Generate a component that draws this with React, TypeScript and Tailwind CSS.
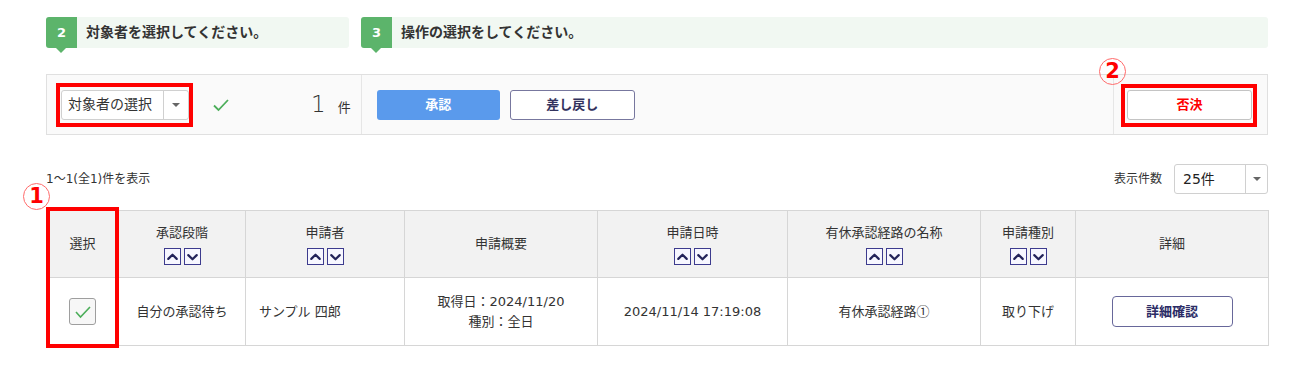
import React from 'react';

// Column definitions for the approval table.
interface Column {
  label: string;
  width: number;
  sortable: boolean;
}

const columns: Column[] = [
  { label: '選択', width: 72, sortable: false },
  { label: '承認段階', width: 127, sortable: true },
  { label: '申請者', width: 159, sortable: true },
  { label: '申請概要', width: 193, sortable: false },
  { label: '申請日時', width: 190, sortable: true },
  { label: '有休承認経路の名称', width: 193, sortable: true },
  { label: '申請種別', width: 95, sortable: true },
  { label: '詳細', width: 193, sortable: false },
];

// Latin glyphs in DejaVu (wide, like the original), Japanese falls through to Noto CJK.
const font = { fontFamily: '"DejaVu Sans", "Noto Sans CJK JP", sans-serif' };

// Step banner with a green number badge and a small tail underneath.
const StepBanner: React.FC<{ num: string; text: string; className: string }> = ({ num, text, className }) => (
  <div className={`flex h-[31px] items-center rounded-[3px] bg-[#f1f8f2] ${className}`}>
    <div className="relative flex h-full w-[31px] items-center justify-center rounded-l-[3px] bg-[#5cb46b] text-[13px] font-bold text-white">
      {num}
      <span className="absolute left-[10px] top-full h-0 w-0 border-x-[5px] border-t-[5px] border-x-transparent border-t-[#5cb46b]" />
    </div>
    <span className="ml-[9px] text-[14px] font-bold text-[#333]">{text}</span>
  </div>
);

const SortButtons: React.FC = () => (
  <div className="mt-[6px] flex justify-center gap-[3px]">
    {['M3.5 10 L8 5.5 L12.5 10', 'M3.5 6 L8 10.5 L12.5 6'].map(d => (
      <span key={d} className="flex h-[17px] w-[17px] items-center justify-center border-[1.5px] border-[#3d3b8e] bg-[#f7f7ff]">
        <svg width="16" height="16" viewBox="0 0 16 16">
          <path d={d} fill="none" stroke="#23235a" strokeWidth="2.3" strokeLinecap="round" strokeLinejoin="round" />
        </svg>
      </span>
    ))}
  </div>
);

const CircledNumber: React.FC<{ n: string; className: string }> = ({ n, className }) => (
  <div className={`absolute flex h-[27px] w-[27px] items-center justify-center rounded-full border border-[#ff6b6b] text-[21px] font-bold leading-none text-[#ff0000] ${className}`}>
    {n}
  </div>
);

export default function App() {
  return (
    <div className="relative h-[366px] w-[1297px] overflow-hidden bg-white pl-[46px] pr-[29px] pt-[17px] text-[#333]" style={font}>
      {/* Steps */}
      <div className="flex gap-[12px]">
        <StepBanner num="2" text="対象者を選択してください。" className="w-[303px]" />
        <StepBanner num="3" text="操作の選択をしてください。" className="flex-1" />
      </div>

      {/* Action panel */}
      <div className="mt-[26px] flex h-[61px] items-stretch border border-[#e0e0e0] bg-[#fafafa]">
        <div className="flex items-center border-r border-[#e6e6e6] pl-[14px] pr-[10px]">
          <div className="flex h-[30px] w-[128px] items-center rounded-[3px] border border-[#d0d0d0] bg-white">
            <span className="flex-1 pl-[6px] text-[14px] text-[#333]">対象者の選択</span>
            <span className="flex h-full w-[25px] items-center justify-center border-l border-[#d0d0d0]">
              <span className="h-0 w-0 border-x-[4px] border-t-[4px] border-x-transparent border-t-[#666]" />
            </span>
          </div>
          <svg className="ml-[23px]" width="18" height="14" viewBox="0 0 18 14">
            <path d="M2 7.5 L6.5 12 L16 2" fill="none" stroke="#4cae5a" strokeWidth="1.8" />
          </svg>
          <span className="ml-[81px] text-[23px] font-light leading-none text-[#333]">1</span>
          <span className="ml-[12px] mt-[6px] text-[13px] text-[#333]">件</span>
        </div>
        <div className="flex flex-1 items-center gap-[10px] pl-[15px]">
          <button className="h-[30px] w-[123px] rounded-[3px] bg-[#5a9aec] text-[13px] font-bold text-white">承認</button>
          <button className="h-[30px] w-[125px] rounded-[3px] border border-[#77779e] bg-white text-[13px] font-bold text-[#33335e]">差し戻し</button>
        </div>
        <div className="flex items-center border-l border-[#e6e6e6] pl-[13px] pr-[15px]">
          <button className="h-[30px] w-[125px] rounded-[3px] border border-[#c4c4c4] bg-white text-[13px] font-bold text-[#ff0000]">否決</button>
        </div>
      </div>

      {/* Count + page size */}
      <div className="mt-[29px] flex h-[30px] items-center justify-between">
        <span className="text-[12px] text-[#333]">1～1(全1)件を表示</span>
        <div className="flex items-center">
          <span className="text-[12px] text-[#333]">表示件数</span>
          <div className="ml-[12px] flex h-[30px] w-[94px] items-center rounded-[3px] border border-[#d0d0d0] bg-white">
            <span className="flex-1 pl-[8px] text-[14px] text-[#222]">25件</span>
            <span className="flex h-full w-[22px] items-center justify-center border-l border-[#d0d0d0]">
              <span className="h-0 w-0 border-x-[4px] border-t-[4px] border-x-transparent border-t-[#666]" />
            </span>
          </div>
        </div>
      </div>

      {/* Table */}
      <table className="mt-[16px] w-[1222px] table-fixed border-collapse text-[13px]">
        <colgroup>
          {columns.map(c => (
            <col key={c.label} style={{ width: c.width }} />
          ))}
        </colgroup>
        <thead>
          <tr className="h-[67px] bg-[#f2f2f2]">
            {columns.map(c => (
              <th key={c.label} className="border border-[#d6d6d6] px-1 text-center align-middle text-[13px] font-normal text-[#333]">
                <div>{c.label}</div>
                {c.sortable && <SortButtons />}
              </th>
            ))}
          </tr>
        </thead>
        <tbody>
          <tr className="h-[68px] bg-white">
            <td className="border border-[#d6d6d6] text-center align-middle">
              <span className="inline-flex h-[27px] w-[27px] items-center justify-center rounded-[3px] border border-[#9e9e9e] bg-[#f7f7f7] align-middle">
                <svg width="18" height="14" viewBox="0 0 18 14">
                  <path d="M2 7 L6.5 12 L16 2" fill="none" stroke="#4cae5a" strokeWidth="1.6" />
                </svg>
              </span>
            </td>
            <td className="border border-[#d6d6d6] text-center">自分の承認待ち</td>
            <td className="border border-[#d6d6d6] pl-[13px] text-left">サンプル 四郎</td>
            <td className="border border-[#d6d6d6] text-center leading-[20px]">
              <div>取得日：2024/11/20</div>
              <div>種別：全日</div>
            </td>
            <td className="border border-[#d6d6d6] text-center">2024/11/14 17:19:08</td>
            <td className="border border-[#d6d6d6] text-center">
              有休承認経路<span className="font-['Noto_Sans_CJK_JP',sans-serif]">①</span>
            </td>
            <td className="border border-[#d6d6d6] text-center">取り下げ</td>
            <td className="border border-[#d6d6d6] text-center">
              <button className="h-[31px] w-[121px] rounded-[4px] border border-[#67679a] bg-white text-[13px] font-bold text-[#2c2c66]">詳細確認</button>
            </td>
          </tr>
        </tbody>
      </table>

      {/* Red annotations */}
      <div className="pointer-events-none absolute left-[56px] top-[83px] h-[44px] w-[137px] border-[4px] border-[#ff0000]" />
      <div className="pointer-events-none absolute left-[1121px] top-[84px] h-[43px] w-[136px] border-[4px] border-[#ff0000]" />
      <div className="pointer-events-none absolute left-[46px] top-[207px] h-[141px] w-[73px] border-[4px] border-[#ff0000]" />
      <CircledNumber n="2" className="left-[1099px] top-[58px]" />
      <CircledNumber n="1" className="left-[23px] top-[183px]" />
    </div>
  );
}
